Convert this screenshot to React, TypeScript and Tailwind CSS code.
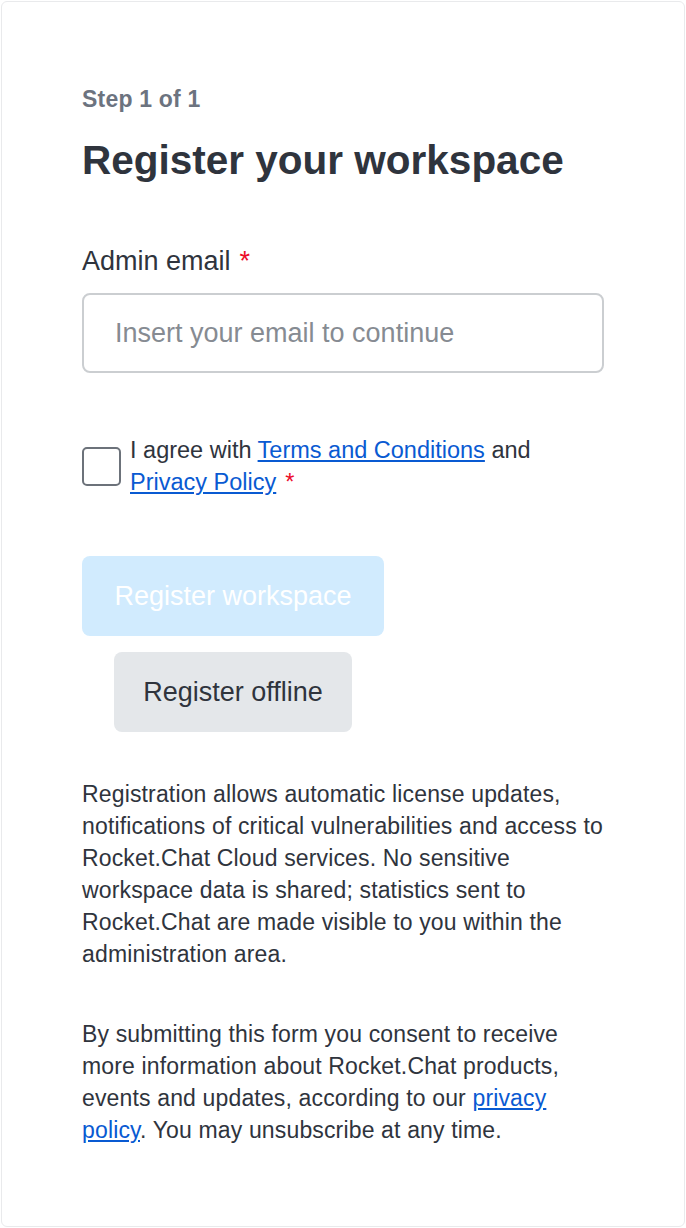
import { useState } from 'react';

const font = { fontFamily: '"Liberation Sans", Arial, sans-serif' };

function Required() {
  return <span className="ml-[9px] text-[#ec0d2a]">*</span>;
}

export default function App() {
  const [email, setEmail] = useState('');
  const [agreed, setAgreed] = useState(false);

  return (
    <div className="min-h-[1228px] bg-white p-px" style={font}>
      <div className="h-[1226px] rounded-[6px] border border-[#e9eaec] px-[80px] pt-[81px] text-[#2f343d]">
        <div className="text-[23px] font-bold leading-[32px] tracking-[0.2px] text-[#6c737f]">Step 1 of 1</div>
        <h1 className="mt-[21px] text-[40.5px] font-bold leading-[48px] text-[#2f343d]">
          Register your workspace
        </h1>

        <label className="mt-[59px] block text-[27px] leading-[36px] text-[#2f343d]">
          Admin email
          <Required />
        </label>
        <input
          type="email"
          value={email}
          onChange={(e) => setEmail(e.target.value)}
          placeholder="Insert your email to continue"
          className="mt-[14px] block h-[80px] w-full rounded-[8px] border-2 border-[#cbced1] px-[31px] text-[27px] text-[#2f343d] outline-none placeholder:text-[#868b92]"
        />

        <div className="mt-[61px] flex items-center">
          <button
            type="button"
            aria-label="Agree"
            onClick={() => setAgreed(!agreed)}
            className={`h-[39px] w-[39px] shrink-0 rounded-[5px] border-2 border-[#6c727a] ${
              agreed ? 'bg-[#156ff5]' : 'bg-white'
            }`}
          />
          <p className="ml-[9px] text-[23.5px] leading-[32px] text-[#2f343d]">
            I agree with{' '}
            <a href="#" className="text-[#095ad2] underline">
              Terms and Conditions
            </a>{' '}
            and{' '}
            <a href="#" className="text-[#095ad2] underline">
              Privacy Policy
            </a>
            <Required />
          </p>
        </div>

        <div className="mt-[58px] flex flex-col items-start gap-[16px]">
          <button
            type="button"
            disabled
            className="h-[80px] w-[302px] rounded-[8px] bg-[#d1ebfe] text-[27px] text-white"
          >
            Register workspace
          </button>
          <button
            type="button"
            className="ml-[32px] h-[80px] w-[238px] rounded-[8px] bg-[#e4e7ea] text-[27px] text-[#2f343d]"
          >
            Register offline
          </button>
        </div>

        <p className="mt-[46px] text-[23px] leading-[32px] tracking-[0.15px] text-[#2f343d]">
          Registration allows automatic license updates, notifications of critical vulnerabilities and access to
          Rocket.Chat Cloud services. No sensitive workspace data is shared; statistics sent to Rocket.Chat are made
          visible to you within the administration area.
        </p>
        <p className="mt-[48px] text-[23px] leading-[32px] tracking-[0.15px] text-[#2f343d]">
          By submitting this form you consent to receive more information about Rocket.Chat products, events and
          updates, according to our{' '}
          <a href="#" className="text-[#095ad2] underline">
            privacy policy
          </a>
          . You may unsubscribe at any time.
        </p>
      </div>
    </div>
  );
}
